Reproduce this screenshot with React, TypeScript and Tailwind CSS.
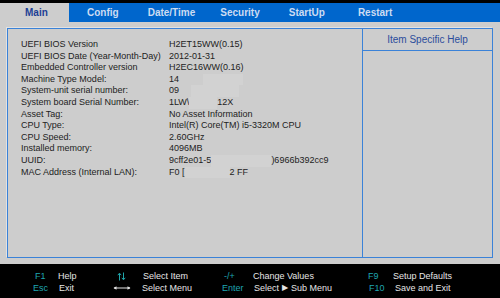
import React from "react";

const rows: [string, React.ReactNode][] = [
  ["UEFI BIOS Version", "H2ET15WW(0.15)"],
  ["UEFI BIOS Date (Year-Month-Day)", "2012-01-31"],
  ["Embedded Controller version", "H2EC16WW(0.16)"],
  [
    "Machine Type Model:",
    <span className="flex">
      <span>14</span>
      <span className="ml-[24px] w-[40px] bg-[#d2d2d2]">&nbsp;</span>
    </span>,
  ],
  [
    "System-unit serial number:",
    <span className="flex">
      <span>09</span>
      <span className="ml-[12px] w-[48px] bg-[#d2d2d2]">&nbsp;</span>
    </span>,
  ],
  [
    "System board Serial Number:",
    <span className="flex">
      <span>1LW\</span>
      <span className="w-[28px] bg-[#d2d2d2]">&nbsp;</span>
      <span>12X</span>
    </span>,
  ],
  ["Asset Tag:", "No Asset Information"],
  ["CPU Type:", "Intel(R) Core(TM) i5-3320M CPU"],
  ["CPU Speed:", "2.60GHz"],
  ["Installed memory:", "4096MB"],
  [
    "UUID:",
    <span className="flex">
      <span>9cff2e01-5</span>
      <span className="w-[60px] bg-[#d2d2d2]">&nbsp;</span>
      <span>)6966b392cc9</span>
    </span>,
  ],
  [
    "MAC Address (Internal LAN):",
    <span className="flex">
      <span>F0 [</span>
      <span className="w-[45px] bg-[#d2d2d2]">&nbsp;</span>
      <span>2 FF</span>
    </span>,
  ],
];

function UpDown() {
  return (
    <svg width="9" height="9" viewBox="0 0 9 9" className="inline-block">
      <path d="M2.5 8.5V1.5M0.8 3.2L2.5 1.2L4.2 3.2" stroke="#1fa5aa" strokeWidth="1" fill="none" />
      <path d="M6.5 0.5V7.5M4.8 5.8L6.5 7.8L8.2 5.8" stroke="#1fa5aa" strokeWidth="1" fill="none" />
    </svg>
  );
}

function LeftRight() {
  return (
    <svg width="18" height="6" viewBox="0 0 18 6" className="inline-block">
      <path d="M1 3H17" stroke="#e6e6e6" strokeWidth="1" />
      <path d="M0.5 3L3.5 1.2V4.8Z M17.5 3L14.5 1.2V4.8Z" fill="#e6e6e6" />
    </svg>
  );
}

export default function App() {
  const key = "text-[#1fa5b0]";
  return (
    <div className="w-[500px] h-[298px] bg-[#cdcdcd] flex flex-col overflow-hidden font-['Liberation_Sans',Arial,sans-serif]">
      <div className="h-[3px] bg-black shrink-0" />
      <div className="h-[19px] shrink-0 bg-[#0066cc] flex items-center text-[10px] font-bold text-[#cddcf2]">
        <div className="w-[69px] h-full bg-[#cdcdcd] text-[#1c3f95] flex items-center pl-[25px]">Main</div>
        <div className="ml-[18px]">Config</div>
        <div className="ml-[29px]">Date/Time</div>
        <div className="ml-[25px]">Security</div>
        <div className="ml-[29px]">StartUp</div>
        <div className="ml-[33px]">Restart</div>
      </div>
      <div className="flex-1 px-[7px] pt-[6px] pb-[6px]">
        <div className="h-full border border-[#3a82d8] shadow-[-1px_-1px_0_#e2e2e2] flex">
          <div className="w-[355px] border-r border-[#3a82d8] pt-[10px] pl-[13px] text-[9px] leading-[11.6px] text-[#222222]">
            {rows.map(([l, v], i) => (
              <div key={i} className="flex">
                <div className="w-[148px] shrink-0">{l}</div>
                <div>{v}</div>
              </div>
            ))}
          </div>
          <div className="flex-1 flex flex-col">
            <div className="h-[22px] border-b border-[#3a82d8] flex items-center justify-center text-[10px] text-[#2b4c9c]">
              Item Specific Help
            </div>
          </div>
        </div>
      </div>
      <div className="h-[34px] shrink-0 bg-black pt-[6px] text-[9px] leading-[12px] text-[#e6e6e6]">
        <div className="flex items-center">
          <div className={`ml-[35px] w-[23px] ${key}`}>F1</div>
          <div className="w-[58px]">Help</div>
          <div className="w-[27px] flex items-center pl-[1px]"><UpDown /></div>
          <div className="w-[79px]">Select Item</div>
          <div className={`w-[31px] pl-[2px] ${key}`}>-/+</div>
          <div className="w-[115px]">Change Values</div>
          <div className={`w-[25px] ${key}`}>F9</div>
          <div>Setup Defaults</div>
        </div>
        <div className="flex items-center">
          <div className={`ml-[33px] w-[26px] ${key}`}>Esc</div>
          <div className="w-[54px]">Exit</div>
          <div className="w-[29px] flex items-center"><LeftRight /></div>
          <div className="w-[80px]">Select Menu</div>
          <div className={`w-[32px] ${key}`}>Enter</div>
          <div className="w-[115px] flex items-center">Select <span className="mx-[3px] text-[8px]">▶</span> Sub Menu</div>
          <div className={`w-[26px] ${key}`}>F10</div>
          <div>Save and Exit</div>
        </div>
      </div>
    </div>
  );
}
